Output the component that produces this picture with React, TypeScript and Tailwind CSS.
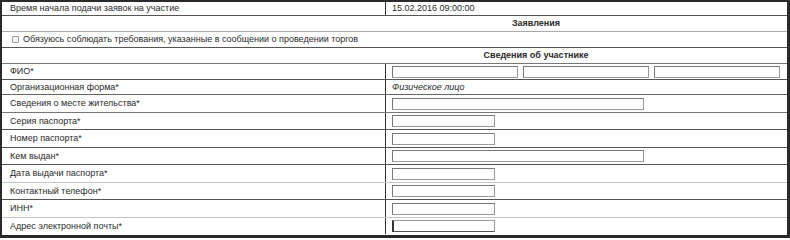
const font = "font-['Liberation_Sans',Arial,sans-serif]";

type Row = {
  label: string;
  h: string;
  line: string;
  field: 'fio' | 'text' | 'short' | 'long' | 'focus';
  value?: string;
};

const rows: Row[] = [
  { label: 'ФИО*', h: 'h-[16px]', line: 'border-[#555]', field: 'fio' },
  { label: 'Организационная форма*', h: 'h-[15px]', line: 'border-[#666]', field: 'text', value: 'Физическое лицо' },
  { label: 'Сведения о месте жительства*', h: 'h-[18px]', line: 'border-[#777]', field: 'long' },
  { label: 'Серия паспорта*', h: 'h-[17px]', line: 'border-[#555]', field: 'short' },
  { label: 'Номер паспорта*', h: 'h-[18px]', line: 'border-[#555]', field: 'short' },
  { label: 'Кем выдан*', h: 'h-[17px]', line: 'border-[#555]', field: 'long' },
  { label: 'Дата выдачи паспорта*', h: 'h-[18px]', line: 'border-[#c4c4c4]', field: 'short' },
  { label: 'Контактный телефон*', h: 'h-[17px]', line: 'border-[#555]', field: 'short' },
  { label: 'ИНН*', h: 'h-[18px]', line: 'border-[#c4c4c4]', field: 'short' },
  { label: 'Адрес электронной почты*', h: 'h-[17px]', line: 'border-transparent', field: 'focus' },
];

function Box({ w, focus }: { w: string; focus?: boolean }) {
  return (
    <div
      className={`${w} h-[12px] bg-white border ${
        focus
          ? 'border-[#999] border-l-2 border-l-[#333] border-b-[#555]'
          : 'border-[#999] border-t-[#777] border-l-[#777]'
      }`}
    />
  );
}

function Field({ row }: { row: Row }) {
  if (row.field === 'fio') {
    return (
      <div className="flex gap-[5px]">
        <Box w="w-[126px]" />
        <Box w="w-[126px]" />
        <Box w="w-[126px]" />
      </div>
    );
  }
  if (row.field === 'text') return <span className="italic">{row.value}</span>;
  if (row.field === 'long') return <Box w="w-[252px]" />;
  if (row.field === 'focus') return <Box w="w-[103px]" focus />;
  return <Box w="w-[103px]" />;
}

export default function App() {
  return (
    <div className={`${font} w-[790px] h-[238px] bg-white text-[#2a2a2a] text-[9px] leading-none`}>
      <div className="h-full flex flex-col border-t-2 border-l-2 border-r-[3px] border-b-[3px] border-[#2a2a2a]">
        {/* Время начала */}
        <div className="flex h-[14px] border-b border-[#555]">
          <div className="w-[384px] flex items-center pl-[8px] border-r border-[#333]">
            Время начала подачи заявок на участие
          </div>
          <div className="flex-1 flex items-center pl-[6px]">15.02.2016 09:00:00</div>
        </div>

        {/* Заявления */}
        <div className="h-[16px] flex items-center justify-center pl-[283px] font-bold border-b border-[#aaa]">
          Заявления
        </div>

        {/* Согласие */}
        <div className="h-[16px] flex items-center pl-[10px] gap-[4px] border-b border-[#555]">
          <span className="w-[7px] h-[7px] border border-[#999] rounded-[1px] bg-[#f4f4f4]" />
          <span>Обязуюсь соблюдать требования, указанные в сообщении о проведении торгов</span>
        </div>

        {/* Сведения об участнике */}
        <div className="h-[16px] flex items-center justify-center pl-[283px] font-bold border-b border-[#777]">
          Сведения об участнике
        </div>

        {rows.map((row) => (
          <div key={row.label} className={`flex ${row.h} border-b ${row.line}`}>
            <div className="w-[384px] flex items-center pl-[8px] border-r border-[#333]">{row.label}</div>
            <div className="flex-1 flex items-center pl-[6px]">
              <Field row={row} />
            </div>
          </div>
        ))}
      </div>
    </div>
  );
}
